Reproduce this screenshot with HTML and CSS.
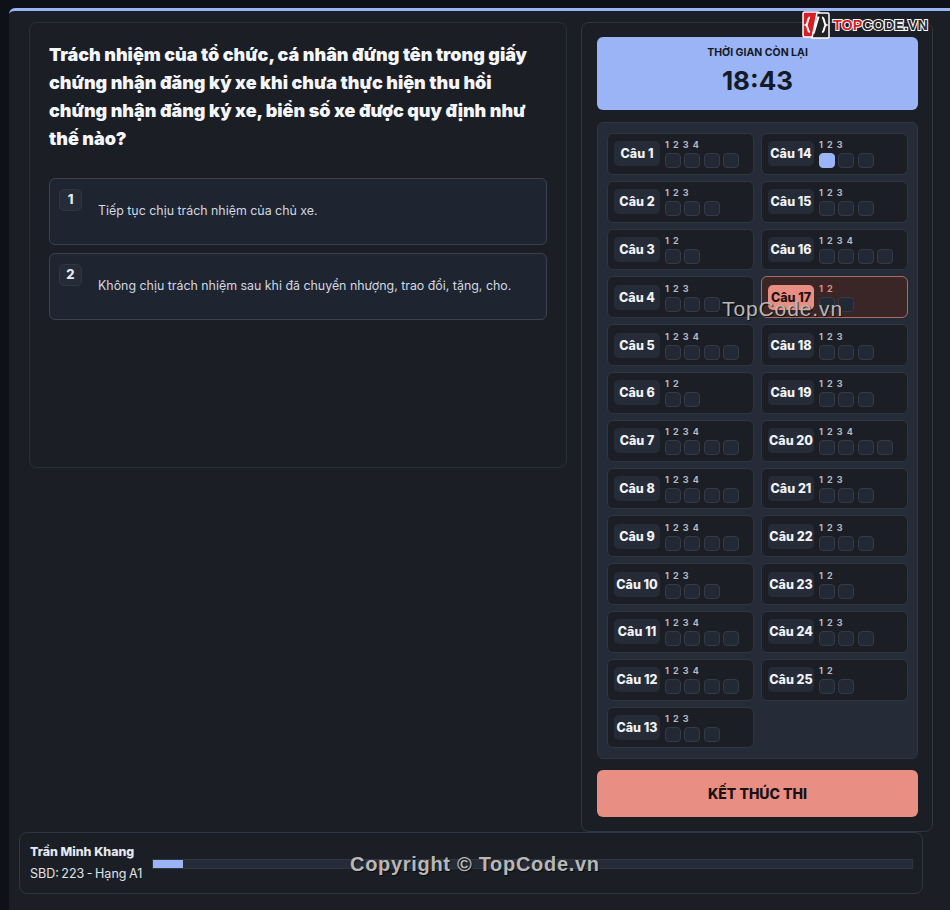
FILE: index.html
```html
<!DOCTYPE html>
<html lang="vi">
<head>
  <meta charset="UTF-8" />
  <title>Thi thử bằng lái xe</title>
  <link rel="stylesheet" href="styles.css">
</head>
<body>
  <div class="shell">
    <div class="main">
      <section class="questionCard">
        <h1 class="questionTitle">Trách nhiệm của tổ chức, cá nhân đứng tên trong giấy chứng nhận đăng ký xe khi chưa thực hiện thu hồi chứng nhận đăng ký xe, biển số xe được quy định như thế nào?</h1>
        <div class="option">
          <span class="optionNum">1</span>
          <p class="optionText">Tiếp tục chịu trách nhiệm của chủ xe.</p>
        </div>
        <div class="option">
          <span class="optionNum">2</span>
          <p class="optionText">Không chịu trách nhiệm sau khi đã chuyển nhượng, trao đổi, tặng, cho.</p>
        </div>
      </section>

      <aside class="sideCard">
        <div class="timer">
          <div class="timerLabel">THỜI GIAN CÒN LẠI</div>
          <div class="timerValue">18:43</div>
        </div>
        <div class="questionGrid" id="questionGrid"></div>
        <button class="finishButton">KẾT THÚC THI</button>
      </aside>
    </div>

    <footer class="studentBar">
      <div class="student">
        <div class="studentName">Trần Minh Khang</div>
        <div class="studentInfo">SBD: 223 - Hạng A1</div>
      </div>
      <div class="progress"><div class="progressFill" style="width: 4%"></div></div>
    </footer>
  </div>

  <div class="logo">
    <svg class="logoMark" xmlns="http://www.w3.org/2000/svg" width="28" height="28" viewBox="0 0 28 28">
      <rect x="1" y="1" width="17" height="25" rx="2" fill="#d81e24" stroke="#fff" stroke-width="1.5"/>
      <path d="M15 2 H26 a1.5 1.5 0 0 1 1 1.5 V25.500 a1.500 1.500 0 0 1 -1.500 1.500 H10 Z" fill="#222224" stroke="#fff" stroke-width="1.500"/>
      <path d="M8 6.500 C5 6.500 6.500 13 4 14 C6.500 15 5 21 8 21" fill="none" stroke="#fff" stroke-width="2"/>
      <path d="M20 6.500 C23 6.500 21.500 13 24 14 C21.500 15 23 21 20 21" fill="none" stroke="#fff" stroke-width="2"/>
      <path d="M16.500 5.500 L11.500 22.500" stroke="#fff" stroke-width="2.200"/>
    </svg>
    <span class="logoText"><span class="logoTop">TOP</span>CODE.VN</span>
  </div>
  <div class="markCenter">TopCode.vn</div>
  <div class="markBottom">Copyright © TopCode.vn</div>

  <script>
    const grid = document.getElementById('questionGrid');
    const answers = [4, 3, 2, 3, 4, 2, 4, 4, 4, 3, 4, 4, 3, 3, 3, 4, 2, 3, 3, 4, 3, 3, 2, 3, 2];

    answers.forEach((count, i) => {
      const num = i + 1;
      const nums = [];
      let boxes = '';
      for (let k = 1; k <= count; k++) {
        nums.push(k);
        boxes += `<span class="answerBox${num === 14 && k === 1 ? ' picked' : ''}"></span>`;
      }
      const item = document.createElement('div');
      item.className = num === 17 ? 'gridItem current' : 'gridItem';
      item.innerHTML = `
        <span class="itemLabel">Câu ${num}</span>
        <div class="itemAnswers">
          <div class="answerNums">${nums.join(' ')}</div>
          <div class="answerBoxes">${boxes}</div>
        </div>
      `;
      grid.appendChild(item);
    });
  </script>
</body>
</html>
```

FILE: styles.css
```css
* {
  box-sizing: border-box;
}

html, body {
  height: 100%;
}

body {
  margin: 0;
  padding: 8px 0 0 9px;
  background-color: #0e1218;
  color: #fff;
  font-family: Inter, "Liberation Sans", sans-serif;
  overflow: hidden;
}

.shell {
  height: 910px;
  padding-top: 11px;
  background-color: #1b1e25;
  border-top: 3px solid #9ab4f5;
  border-top-left-radius: 6px;
}

.main {
  display: flex;
  align-items: flex-start;
  gap: 14px;
  padding: 0 17px 0 20px;
}

.questionCard {
  width: 538px;
  height: 446px;
  padding: 18px 19px;
  border: 1px solid #2a303b;
  border-radius: 8px;
}

.questionTitle {
  margin: 0 0 25px;
  font-size: 18px;
  line-height: 28px;
  font-weight: 900;
  letter-spacing: -0.04px;
  color: #f4f6fa;
}

.option {
  display: flex;
  height: 67px;
  margin-bottom: 8px;
  padding: 10px 9px;
  background-color: #1e2430;
  border: 1px solid #3a4252;
  border-radius: 6px;
}

.optionNum {
  width: 23px;
  height: 22px;
  margin-right: 16px;
  flex-shrink: 0;
  background-color: #262c37;
  border: 1px solid #2f3642;
  border-radius: 5px;
  text-align: center;
  font-size: 13px;
  line-height: 19px;
  font-weight: 800;
  color: #e6e9ef;
}

.optionText {
  margin: 13px 0 0;
  font-size: 12.400px;
  line-height: 18px;
  color: #d4d8e0;
}

.sideCard {
  width: 352px;
  height: 810px;
  padding: 14px 14px 14px 15px;
  border: 1px solid #2f3642;
  border-radius: 8px;
}

.timer {
  height: 73px;
  padding-top: 10px;
  background-color: #9ab4f5;
  border-radius: 6px;
  text-align: center;
  color: #141a26;
}

.timerLabel {
  font-size: 10.500px;
  line-height: 12px;
  font-weight: 700;
}

.timerValue {
  margin-top: 6px;
  font-size: 26px;
  line-height: 32px;
  font-weight: 700;
}

.questionGrid {
  display: grid;
  grid-auto-flow: column;
  grid-template-columns: 147px 147px;
  grid-template-rows: repeat(13, 41.8px);
  gap: 6px 7px;
  height: 637px;
  margin: 12px 0 11px;
  padding: 10px 9px 9px;
  background-color: #262c37;
  border: 1px solid #2f3642;
  border-radius: 6px;
}

.gridItem {
  display: flex;
  align-items: center;
  gap: 5px;
  padding: 0 6px;
  background-color: #1b1e25;
  border: 1px solid #2f3541;
  border-radius: 6px;
}

.itemLabel {
  width: 46px;
  height: 25px;
  flex-shrink: 0;
  background-color: #262c37;
  border-radius: 5px;
  text-align: center;
  font-size: 12.500px;
  line-height: 25px;
  font-weight: 800;
  color: #f0f2f6;
}

.itemAnswers {
  margin-top: 1px;
}

.answerNums {
  height: 13px;
  font-size: 9px;
  line-height: 10px;
  font-weight: 700;
  word-spacing: 1px;
  letter-spacing: 0.5px;
  color: #b4bac5;
}

.answerBoxes {
  display: flex;
  gap: 3.300px;
}

.answerBox {
  width: 16px;
  height: 15px;
  background-color: #232934;
  border: 1px solid #343b47;
  border-radius: 4px;
}

.answerBox.picked {
  background-color: #9ab4f5;
  border-color: #9ab4f5;
}

.gridItem.current {
  background-color: #3a2626;
  border-color: #a86c62;
}

.current .itemLabel {
  background-color: #e88e82;
  color: #1f1214;
}

.current .answerNums {
  color: #e88e82;
}

.finishButton {
  display: block;
  width: 100%;
  height: 47px;
  background-color: #e88e82;
  border: 0;
  border-radius: 6px;
  font-family: inherit;
  font-size: 14px;
  font-weight: 800;
  color: #1a1214;
}

.studentBar {
  display: flex;
  align-items: center;
  gap: 9px;
  width: 904px;
  height: 62px;
  margin: 0 0 0 10px;
  padding: 0 9px 0 10px;
  border: 1px solid #2f3642;
  border-radius: 8px;
}

.student {
  flex-shrink: 0;
  width: 113px;
}

.studentName {
  font-size: 12.400px;
  line-height: 20px;
  font-weight: 800;
  color: #e6e9ef;
}

.studentInfo {
  margin-top: 2px;
  font-size: 12.500px;
  line-height: 20px;
  word-spacing: -1px;
  white-space: nowrap;
  color: #e0e3ea;
}

.progress {
  flex: 1;
  height: 10px;
  margin-top: 1px;
  background-color: #262c37;
  border: 1px solid #2f3642;
}

.progressFill {
  height: 100%;
  background-color: #9ab4f5;
}

/* watermarks on top of the screenshot */
.logo {
  position: absolute;
  top: 11px;
  left: 802px;
  display: flex;
  align-items: center;
  gap: 3px;
}

.logoText {
  font-family: "Liberation Sans", sans-serif;
  font-size: 14.400px;
  font-weight: 700;
  color: #2a2a2e;
  -webkit-text-stroke: 2px #fff;
  paint-order: stroke fill;
}

.logoTop {
  color: #d81e24;
}

.markCenter,
.markBottom {
  position: absolute;
  font-family: "Liberation Sans", sans-serif;
  color: #b8b8b8;
  text-shadow: 1px 1px 1px rgba(0, 0, 0, 0.7);
}

.markCenter {
  top: 297px;
  left: 722px;
  font-size: 21px;
  letter-spacing: 0.900px;
}

.markBottom {
  top: 853px;
  left: 350px;
  font-size: 20px;
  font-weight: 700;
  letter-spacing: 0.700px;
}
```
